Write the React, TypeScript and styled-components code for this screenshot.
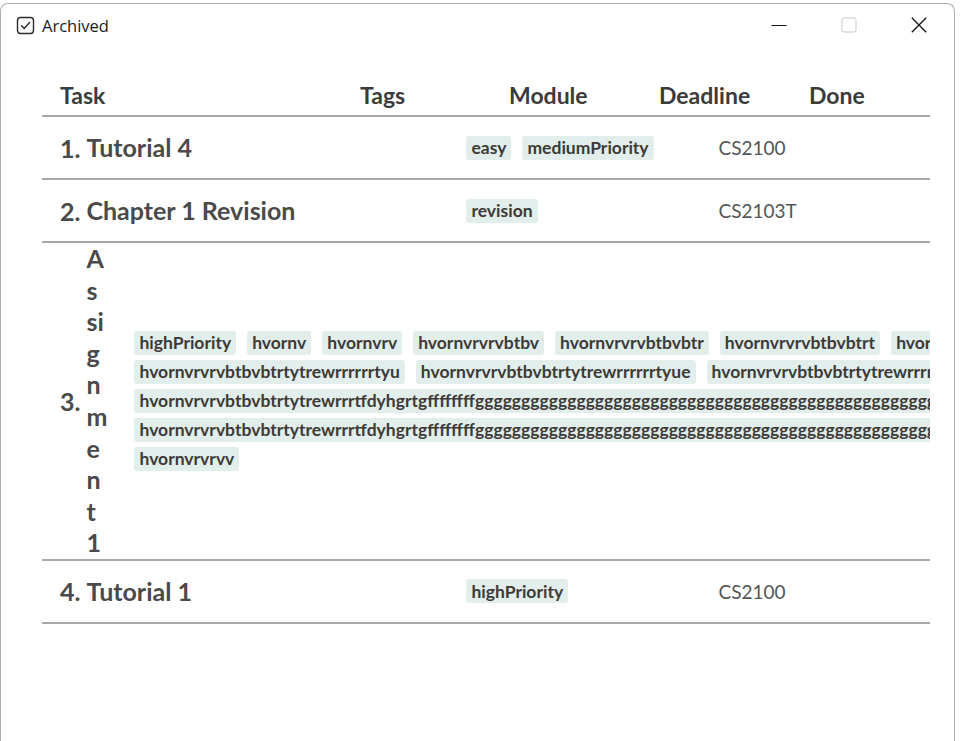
import React from "react";
import styled, { createGlobalStyle } from "styled-components";

const Global = createGlobalStyle`
  html, body { margin: 0; padding: 0; background: #ffffff; }
  body { font-family: "Lato", "Open Sans", sans-serif; overflow: hidden; }
  * { box-sizing: border-box; }
`;

const Window = styled.div`
  width: 955px;
  height: 738px;
  margin-top: 3px;
  background: #ffffff;
  border: 1px solid #aeaeae;
  border-bottom: none;
  border-radius: 8px 8px 0 0;
  display: flex;
  flex-direction: column;
  overflow: hidden;
`;

const TitleBar = styled.div`
  height: 42px;
  display: flex;
  align-items: center;
  padding-left: 15px;
  flex: none;
`;

const TitleText = styled.span`
  font-family: "Open Sans", "Noto Sans", sans-serif;
  font-size: 16.5px;
  color: #1b1b1b;
  margin-left: 7px;
  flex: 1;
`;

const Controls = styled.div`
  display: flex;
  height: 100%;
`;

const ControlButton = styled.div`
  width: 70px;
  height: 100%;
  display: flex;
  align-items: center;
  justify-content: center;
`;

const Table = styled.div`
  margin: 29px 25px 0 41px;
  width: 888px;
  overflow: hidden;
`;

const HeaderRow = styled.div`
  display: grid;
  grid-template-columns: 300px 149px 150px 150px 1fr;
  padding-left: 18px;
  height: 42px;
  align-items: center;
  border-bottom: 2px solid #a8a8a8;
`;

const HeaderCell = styled.div`
  font-weight: 700;
  font-size: 23px;
  color: #3b3b3b;
`;

const Row = styled.div`
  display: flex;
  align-items: center;
  min-height: 63px;
  padding-left: 18px;
  border-bottom: 2px solid #a8a8a8;
  overflow: hidden;
`;

const Index = styled.div`
  flex: none;
  font-weight: 700;
  font-size: 25px;
  color: #4a4a4a;
  margin-right: 6px;
`;

const Name = styled.div<{ $width: number }>`
  flex: none;
  width: ${(p) => p.$width}px;
  font-weight: 700;
  font-size: 25px;
  line-height: 31.6px;
  color: #4a4a4a;
  word-break: break-all;
`;

const Tags = styled.div<{ $width: number }>`
  flex: none;
  width: ${(p) => p.$width}px;
  margin-left: 28px;
  display: flex;
  flex-wrap: wrap;
  gap: 5px 11px;
`;

const Chip = styled.span`
  flex: none;
  height: 24px;
  display: inline-flex;
  align-items: center;
  padding: 0 5px;
  border-radius: 3px;
  background: #e1eeeb;
  color: #3d3a36;
  font-weight: 700;
  font-size: 17.5px;
  white-space: nowrap;
`;

const Module = styled.div`
  flex: none;
  font-size: 19px;
  color: #555555;
  white-space: nowrap;
`;

const g = "g".repeat(70);

type Task = {
  name: string;
  tags: string[];
  module: string;
  nameWidth: number;
  tagsWidth: number;
};

const tasks: Task[] = [
  { name: "Tutorial 4", tags: ["easy", "mediumPriority"], module: "CS2100", nameWidth: 352, tagsWidth: 252 },
  { name: "Chapter 1 Revision", tags: ["revision"], module: "CS2103T", nameWidth: 352, tagsWidth: 252 },
  {
    name: "Assignment 1",
    tags: [
      "highPriority",
      "hvornv",
      "hvornvrv",
      "hvornvrvrvbtbv",
      "hvornvrvrvbtbvbtr",
      "hvornvrvrvbtbvbtrt",
      "hvornvrvrvbtbvbtrty",
      "hvornvrvrvbtbvbtrtytrewrrrrrrtyu",
      "hvornvrvrvbtbvbtrtytrewrrrrrrtyue",
      "hvornvrvrvbtbvbtrtytrewrrrrrrtyuew",
      "hvornvrvrvbtbvbtrtytrewrrrtfdyhgrtgffffffff" + g,
      "hvornvrvrvbtbvbtrtytrewrrrtfdyhgrtgffffffff" + g + "g",
      "hvornvrvrvv",
    ],
    module: "CS2101",
    nameWidth: 20,
    tagsWidth: 1010,
  },
  { name: "Tutorial 1", tags: ["highPriority"], module: "CS2100", nameWidth: 352, tagsWidth: 252 },
];

const CheckIcon = () => (
  <svg width="19" height="19" viewBox="0 0 19 19" fill="none">
    <rect x="1.5" y="1.5" width="16" height="16" rx="3" stroke="#2b2b2b" strokeWidth="1.4" />
    <path d="M5.5 9.8 L8.2 12.4 L13.6 6.6" stroke="#2b2b2b" strokeWidth="1.4" strokeLinecap="round" strokeLinejoin="round" />
  </svg>
);

export default function App() {
  return (
    <>
      <Global />
      <Window>
        <TitleBar>
          <CheckIcon />
          <TitleText>Archived</TitleText>
          <Controls>
            <ControlButton>
              <svg width="16" height="16" viewBox="0 0 16 16">
                <path d="M0.5 8.5 H15.5" stroke="#111" strokeWidth="1" />
              </svg>
            </ControlButton>
            <ControlButton>
              <svg width="16" height="16" viewBox="0 0 16 16">
                <rect x="1" y="1" width="14" height="14" rx="2" fill="none" stroke="#c8c8c8" strokeWidth="1" />
              </svg>
            </ControlButton>
            <ControlButton>
              <svg width="16" height="16" viewBox="0 0 16 16">
                <path d="M0.8 0.8 L15.2 15.2 M15.2 0.8 L0.8 15.2" stroke="#111" strokeWidth="1.3" />
              </svg>
            </ControlButton>
          </Controls>
        </TitleBar>
        <Table>
          <HeaderRow>
            <HeaderCell>Task</HeaderCell>
            <HeaderCell>Tags</HeaderCell>
            <HeaderCell>Module</HeaderCell>
            <HeaderCell>Deadline</HeaderCell>
            <HeaderCell>Done</HeaderCell>
          </HeaderRow>
          {tasks.map((t, i) => (
            <Row key={i}>
              <Index>{i + 1}.</Index>
              <Name $width={t.nameWidth}>{t.name}</Name>
              <Tags $width={t.tagsWidth}>
                {t.tags.map((tag, j) => (
                  <Chip key={j}>{tag}</Chip>
                ))}
              </Tags>
              <Module>{t.module}</Module>
            </Row>
          ))}
        </Table>
      </Window>
    </>
  );
}
